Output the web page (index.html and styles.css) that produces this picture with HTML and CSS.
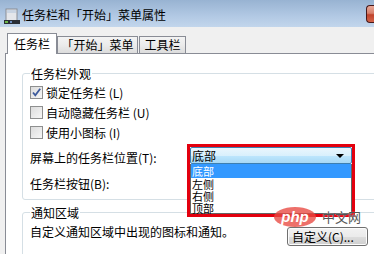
FILE: index.html
```html
<!DOCTYPE html>
<html lang="zh-CN">
<head>
    <meta charset="UTF-8">
    <title>任务栏和「开始」菜单属性</title>
    <link rel="stylesheet" href="styles.css">
</head>
<body>
    <div id="window">
        <div class="titlebar">
            <svg class="app-icon" width="18" height="17" viewBox="0 0 18 17">
                <rect x="3" y="1" width="11" height="12" fill="#e4e6ea" stroke="#8a8e96"/>
                <rect x="4" y="2" width="9" height="3" fill="#c9d4e2"/>
                <rect x="1" y="12" width="16" height="4" fill="#2b2f36"/>
                <rect x="2" y="13" width="3" height="2" fill="#6fb84a"/>
                <rect x="7" y="13" width="2" height="2" fill="#6d8fc0"/>
            </svg>
            <span class="title">任务栏和「开始」菜单属性</span>
            <span class="close"></span>
        </div>

        <ul class="tabs">
            <li class="active">任务栏</li>
            <li>「开始」菜单</li>
            <li>工具栏</li>
        </ul>

        <div class="page">
            <div class="group group-look">
                <div class="legend">任务栏外观</div>
                <div class="check-row">
                    <span class="box">
                        <svg width="11" height="11" viewBox="0 0 11 11"><path d="M2 5.5 L4.3 8.3 L9.2 1.8" fill="none" stroke="#3d5a9c" stroke-width="1.8"/></svg>
                    </span>
                    锁定任务栏 (L)
                </div>
                <div class="check-row"><span class="box"></span>自动隐藏任务栏 (U)</div>
                <div class="check-row"><span class="box"></span>使用小图标 (I)</div>
                <div class="field-row first">屏幕上的任务栏位置(T):</div>
                <div class="field-row">任务栏按钮(B):</div>
            </div>

            <div class="group group-notify">
                <div class="legend">通知区域</div>
                <div class="notify-row">
                    <span>自定义通知区域中出现的图标和通知。</span>
                    <button class="btn">自定义(C)...</button>
                </div>
            </div>
        </div>

        <!-- 展开的下拉框 + 红框标注 -->
        <div class="mark">
            <div class="combo">
                <span>底部</span>
                <span class="arrow"></span>
            </div>
            <ul class="options">
                <li class="selected">底部</li>
                <li>左侧</li>
                <li>右侧</li>
                <li>顶部</li>
            </ul>
        </div>

        <div class="watermark">
            <span class="logo">php</span>
            <span class="site">中文网</span>
        </div>
    </div>
</body>
</html>
```

FILE: styles.css
```css
*{
    margin: 0;
    padding: 0;
    box-sizing: border-box;
}
ul{
    list-style: none;
}
body{
    background: #f0f0f0;
}
#window{
    position: relative;
    width: 374px;
    height: 254px;
    overflow: hidden;
    background: #f0f0f0;
    font-family: "Noto Sans CJK SC", "Liberation Sans", sans-serif;
    font-size: 12px;
    color: #000;
}

/* 标题栏 */
.titlebar{
    height: 27px;
    display: flex;
    align-items: center;
    background: linear-gradient(#98b3d2, #b2c9e4 60%, #c2d6ec);
}
.app-icon{
    margin: 5px 0 0 3px;
    flex: none;
}
.title{
    margin-left: 1px;
    margin-top: 3px;
    line-height: 14px;
}
.close{
    margin: 1px 0 0 auto;
    width: 8px;
    height: 18px;
    border: 1px solid #47191a;
    border-right: none;
    border-radius: 4px 0 0 4px;
    background: linear-gradient(#e9a898, #d7806c 45%, #c0432b 55%, #d2644a);
}

/* 选项卡 */
.tabs{
    display: flex;
    align-items: flex-end;
    height: 20px;
    margin-top: 6px;
    padding-left: 7px;
}
.tabs li{
    height: 17px;
    line-height: 16px;
    border: 1px solid #898c95;
    border-bottom: none;
    margin-right: 1px;
    white-space: nowrap;
    text-align: center;
    background: linear-gradient(#f3f3f3, #ebebeb 50%, #dcdcdc);
}
.tabs li:nth-child(2){
    width: 81px;
}
.tabs li:nth-child(3){
    width: 47px;
}
.tabs .active{
    position: relative;
    z-index: 1;
    width: 50px;
    height: 21px;
    line-height: 19px;
    margin-bottom: -1px;
    margin-right: 0;
    background: #fff;
}

.page{
    width: 520px;
    height: 210px;
    margin-left: 5px;
    padding: 19px 0 0 16px;
    border-left: 1px solid #898c95;
    border-top: 1px solid #898c95;
    background: #fff;
}

/* 分组框 */
.group{
    border: 1px solid #d5dfe5;
    border-radius: 3px;
    padding: 0 0 6px 7px;
}
.legend{
    width: fit-content;
    height: 14px;
    margin-top: -7px;
    padding: 0 1px;
    line-height: 14px;
    background: #fff;
}
.check-row{
    display: flex;
    align-items: center;
    height: 20px;
}
.legend + .check-row{
    margin-top: 1px;
}
.box{
    width: 13px;
    height: 13px;
    margin-right: 3px;
    border: 1px solid #8e8f8f;
    background: linear-gradient(135deg, #dcdcdc, #f6f6f6);
    display: flex;
    align-items: center;
    justify-content: center;
    flex: none;
}
.field-row{
    height: 19px;
    line-height: 19px;
    margin-top: 7px;
}
.field-row.first{
    margin-top: 6px;
}

.group-notify{
    margin-top: 12px;
    height: 60px;
}
.notify-row{
    display: flex;
    align-items: flex-start;
    margin-top: 2px;
    line-height: 19px;
}
.btn{
    margin: 5px 0 0 53px;
    width: 81px;
    height: 19px;
    border: 1px solid #707070;
    border-radius: 3px;
    background: linear-gradient(#f2f2f2, #ebebeb 50%, #dddddd 51%, #cfcfcf);
    font-family: inherit;
    font-size: 12px;
    line-height: 16px;
    text-align: left;
    padding-left: 4px;
    box-shadow: inset 0 0 0 1px #fcfcfc;
}

/* 下拉列表（红框） */
.mark{
    position: absolute;
    left: 187px;
    top: 144px;
    width: 168px;
    height: 73px;
    border: 3px solid #e3000e;
    background: #fff;
}
.combo{
    height: 17px;
    display: flex;
    align-items: center;
    justify-content: space-between;
    padding: 0 7px 0 1px;
    border: 1px solid #3c7fb1;
    border-radius: 2px;
    background: linear-gradient(#eaf6fd, #d9f0fc 50%, #bee6fd 51%, #a7d9f5);
    line-height: 15px;
}
.arrow{
    width: 0;
    height: 0;
    border-left: 4px solid transparent;
    border-right: 4px solid transparent;
    border-top: 4px solid #000;
}
.options{
    border: 1px solid #646464;
    border-top: none;
    height: 50px;
}
.options li{
    height: 12px;
    line-height: 12px;
    font-size: 11px;
    padding-left: 1px;
}
.options .selected{
    height: 14px;
    line-height: 14px;
    background: #3399ff;
    color: #fff;
}

/* 水印 */
.watermark{
    position: absolute;
    left: 274px;
    top: 207px;
    display: flex;
    align-items: center;
}
.logo{
    width: 42px;
    height: 20px;
    border-radius: 50%;
    background: rgba(232, 72, 64, 0.78);
    color: #fff;
    font-family: "Liberation Sans", sans-serif;
    font-style: italic;
    font-weight: bold;
    font-size: 15px;
    line-height: 19px;
    text-align: center;
}
.site{
    margin-left: 6px;
    font-size: 13px;
    line-height: 14px;
    color: #555;
    text-shadow: 0 0 1px #fff;
}
```
